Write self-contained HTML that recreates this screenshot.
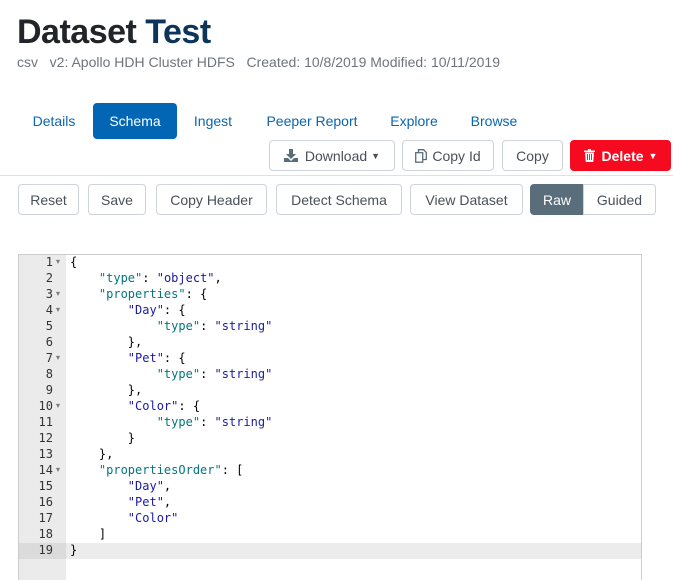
<!DOCTYPE html>
<html><head><style>
*{box-sizing:border-box;margin:0;padding:0}
body{width:673px;height:580px;overflow:hidden;background:#fff;font-family:"Liberation Sans",sans-serif;position:relative}
.a{position:absolute}
h1{position:absolute;left:17px;top:11px;font-size:34px;font-weight:bold;color:#212529;letter-spacing:-0.5px;line-height:42px}
h1 span{color:#0d3559}
.sub{left:17px;top:54px;font-size:14px;color:#6c757d;white-space:pre}
.tab{top:103px;height:36px;line-height:36px;font-size:14px;color:#0a66b0;text-align:center}
.btn{height:31px;border:1px solid #ced4da;border-radius:4px;font-size:14px;color:#495057;display:flex;align-items:center;justify-content:center;background:#fff}
.code{font-family:"DejaVu Sans Mono",monospace;font-size:12px;line-height:16px;white-space:pre}
.k{color:#00767d}.s{color:#1a1aa6}
.ar{position:absolute;left:56px;font-size:8px;line-height:16px;color:#777}
</style></head><body>
<h1>Dataset <span>Test</span></h1>
<div class="a sub">csv   v2: Apollo HDH Cluster HDFS   Created: 10/8/2019 Modified: 10/11/2019</div>

<div class="a tab" style="left:21px;width:66px">Details</div>
<div class="a tab" style="left:93px;width:84px;background:#0366b4;color:#fff;border-radius:4px">Schema</div>
<div class="a tab" style="left:183px;width:60px">Ingest</div>
<div class="a tab" style="left:255px;width:114px">Peeper Report</div>
<div class="a tab" style="left:380px;width:68px">Explore</div>
<div class="a tab" style="left:458px;width:72px">Browse</div>

<div class="a btn" style="left:269px;top:140px;width:126px"><svg width="14" height="13" viewBox="0 0 14 13" style="margin-right:7px"><path d="M5 0h4v5h3L7 10 2 5h3z" fill="#5a6d7b"/><path d="M0 9h4l3 3 3-3h4v4H0z" fill="#5a6d7b"/></svg>Download <span style="font-size:9px;margin-left:4px">▼</span></div>
<div class="a btn" style="left:402px;top:140px;width:92px"><svg width="12" height="14" viewBox="0 0 12 14" style="margin-right:5px"><rect x="0.7" y="3.7" width="7" height="9.5" fill="none" stroke="#5a6d7b" stroke-width="1.3"/><path d="M3.5 3.5V0.7h5l2.8 2.8v7h-3.5" fill="none" stroke="#5a6d7b" stroke-width="1.3"/></svg>Copy Id</div>
<div class="a btn" style="left:502px;top:140px;width:61px">Copy</div>
<div class="a btn" style="left:570px;top:140px;width:101px;background:#f50a1f;border-color:#f50a1f;color:#fff;font-weight:bold"><svg width="11" height="13" viewBox="0 0 11 13" style="margin-right:7px"><path d="M0 1.5h11v1.5H0zM4 0h3v1.5H4zM1 3.5h9L9.3 13H1.7z" fill="#fff"/><path d="M3.5 5v6M5.5 5v6M7.5 5v6" stroke="#f50a1f" stroke-width="0.9"/></svg>Delete<span style="font-size:9px;margin-left:5px">▼</span></div>

<div class="a" style="left:0;top:175px;width:673px;height:1px;background:#dee2e6"></div>

<div class="a btn" style="left:18px;top:184px;width:61px">Reset</div>
<div class="a btn" style="left:88px;top:184px;width:58px">Save</div>
<div class="a btn" style="left:156px;top:184px;width:111px">Copy Header</div>
<div class="a btn" style="left:276px;top:184px;width:126px">Detect Schema</div>
<div class="a btn" style="left:410px;top:184px;width:113px">View Dataset</div>
<div class="a btn" style="left:530px;top:184px;width:54px;background:#5a6d7b;border-color:#5a6d7b;color:#fff;border-radius:4px 0 0 4px">Raw</div>
<div class="a btn" style="left:583px;top:184px;width:73px;border-radius:0 4px 4px 0">Guided</div>

<div class="a" style="left:18px;top:254px;width:624px;height:326px;border:1px solid #ccc;border-bottom:none"></div>
<div class="a" style="left:19px;top:255px;width:47px;height:325px;background:#ebebeb"></div>
<div class="a" style="left:19px;top:543px;width:47px;height:16px;background:#dbdbdb"></div>
<div class="a" style="left:66px;top:543px;width:575px;height:16px;background:#ececec"></div>
<div class="a code" style="left:19px;top:254px;width:34px;text-align:right;color:#333"> 1
 2
 3
 4
 5
 6
 7
 8
 9
10
11
12
13
14
15
16
17
18
19</div>
<span class="ar" style="top:254px">▾</span>
<span class="ar" style="top:286px">▾</span>
<span class="ar" style="top:302px">▾</span>
<span class="ar" style="top:350px">▾</span>
<span class="ar" style="top:398px">▾</span>
<span class="ar" style="top:462px">▾</span>
<div class="a code" style="left:70px;top:254px;color:#000">{
    <span class="k">"type"</span>: <span class="s">"object"</span>,
    <span class="k">"properties"</span>: {
        <span class="s">"Day"</span>: {
            <span class="k">"type"</span>: <span class="s">"string"</span>
        },
        <span class="s">"Pet"</span>: {
            <span class="k">"type"</span>: <span class="s">"string"</span>
        },
        <span class="s">"Color"</span>: {
            <span class="k">"type"</span>: <span class="s">"string"</span>
        }
    },
    <span class="k">"propertiesOrder"</span>: [
        <span class="s">"Day"</span>,
        <span class="s">"Pet"</span>,
        <span class="s">"Color"</span>
    ]
}</div>
</body></html>
